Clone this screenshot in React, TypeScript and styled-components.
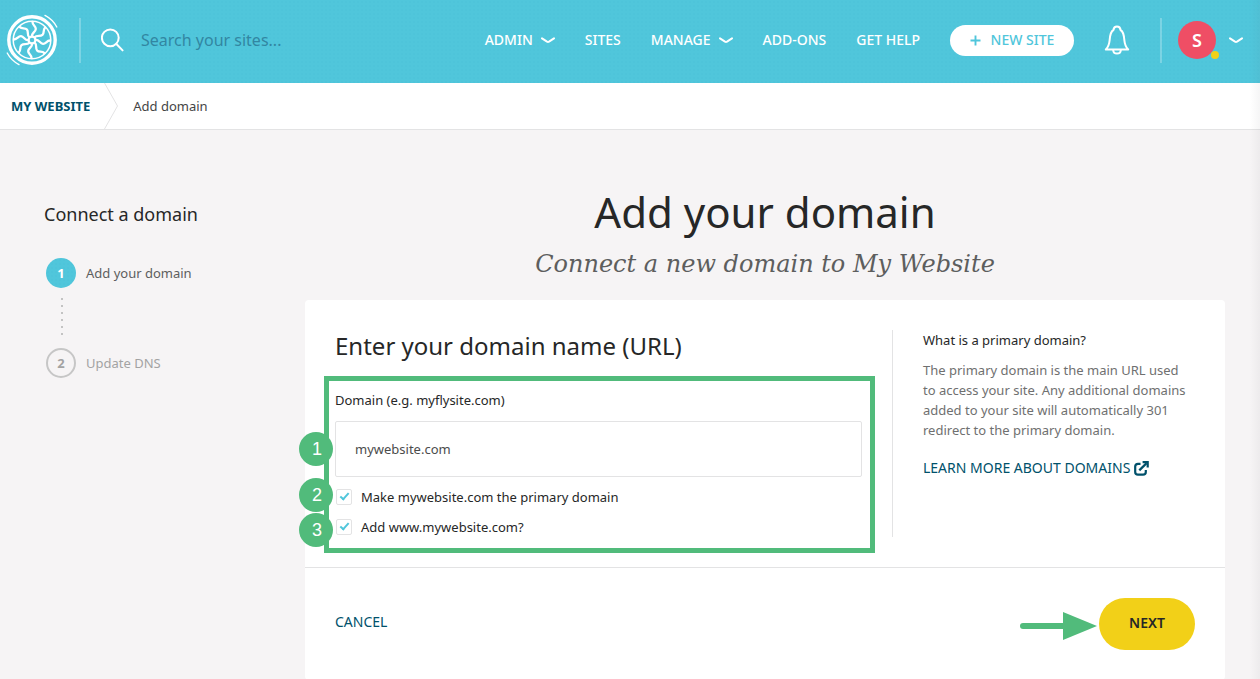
import React from "react";
import styled, { createGlobalStyle, css } from "styled-components";

const color = {
  teal: "#50c6db",
  navy: "#00516b",
  ink: "#262727",
  text: "#5d5e5e",
  muted: "#a3a3a3",
  line: "#e3e3e4",
  page: "#f6f4f5",
  green: "#51bb7b",
  yellow: "#f2d018",
  pink: "#ef4e65",
};

const dots = css`
  background-color: ${color.teal};
  background-image: radial-gradient(circle, rgba(0, 100, 140, 0.02) 1px, transparent 1px);
  background-size: 4px 4px;
`;

const GlobalStyle = createGlobalStyle`
  *, *::before, *::after { box-sizing: border-box; }
  body {
    margin: 0;
    background: ${color.page};
    color: ${color.ink};
    font-family: "Noto Sans", "Open Sans", sans-serif;
    font-size: 13px;
    line-height: 20px;
  }
  h1, h2, h3, p, ol { margin: 0; padding: 0; font-weight: 400; }
  button, input { font: inherit; color: inherit; }
  a { text-decoration: none; color: inherit; }
`;

const Page = styled.div`
  position: relative;
  min-height: 100vh;
  overflow-x: hidden;
`;

const EdgeShade = styled.div`
  position: absolute;
  inset: 0 0 0 auto;
  width: 10px;
  background: linear-gradient(to right, transparent, rgba(90, 90, 100, 0.06));
  pointer-events: none;
`;

const Header = styled.header`
  ${dots}
  display: flex;
  align-items: center;
  height: 83px;
  padding: 0 17px 3px 6px;
  color: #fff;
`;

const Rule = styled.span<{ $before: number; $after: number }>`
  width: 2px;
  height: 45px;
  margin: 0 ${(p) => p.$after}px 0 ${(p) => p.$before}px;
  background: rgba(255, 255, 255, 0.25);
`;

const HomeLink = styled.a`
  display: flex;
`;

const Search = styled.label`
  display: flex;
  flex: 1;
  align-items: center;
  gap: 16px;
  min-width: 0;
`;

const SearchInput = styled.input`
  flex: 1;
  min-width: 0;
  padding: 0;
  border: 0;
  outline: 0;
  background: transparent;
  font-size: 16px;
  line-height: 24px;
  &::placeholder {
    color: #3286a2;
    opacity: 1;
  }
`;

const Nav = styled.nav`
  display: flex;
  align-items: center;
  gap: 30px;
`;

const NavLink = styled.a`
  display: flex;
  align-items: center;
  gap: 8px;
  font-size: 14px;
  font-weight: 500;
  white-space: nowrap;
`;

const NewSite = styled.button`
  display: flex;
  align-items: center;
  justify-content: center;
  gap: 10px;
  width: 124px;
  height: 31px;
  padding: 0;
  border: 0;
  border-radius: 16px;
  background: #fff;
  color: ${color.teal};
  font-size: 14px;
  font-weight: 500;
  white-space: nowrap;
`;

const IconButton = styled.button`
  display: flex;
  align-items: center;
  padding: 0;
  border: 0;
  background: none;
`;

const Account = styled(IconButton)`
  gap: 13px;
`;

const Avatar = styled.span`
  position: relative;
  display: grid;
  place-items: center;
  width: 38px;
  height: 38px;
  border-radius: 50%;
  background: ${color.pink};
  color: #fff;
  font-size: 18px;
  font-weight: 600;
  &::after {
    content: "";
    position: absolute;
    right: -3px;
    bottom: 0;
    width: 8px;
    height: 8px;
    border-radius: 50%;
    background: ${color.yellow};
  }
`;

const Breadcrumb = styled.nav`
  display: flex;
  align-items: center;
  height: 47px;
  padding: 0 11px;
  border-bottom: 1px solid ${color.line};
  background: #fff;
  color: #444545;
`;

const CrumbLink = styled.a`
  color: ${color.navy};
  font-weight: 700;
`;

const CrumbArrow = styled.svg`
  margin: 0 15px 0 14px;
`;

const Main = styled.main`
  display: grid;
  grid-template-columns: 261px minmax(0, 1fr);
  padding: 58px 35px 0 44px;
`;

const Sidebar = styled.aside`
  padding-top: 14px;
`;

const SidebarTitle = styled.h2`
  font-size: 18px;
  line-height: 24px;
`;

const Steps = styled.ol`
  padding: 32px 0 0 2px;
  list-style: none;
`;

const Step = styled.li<{ $active?: boolean }>`
  position: relative;
  display: flex;
  align-items: center;
  gap: 10px;
  color: ${(p) => (p.$active ? color.text : color.muted)};
  &:not(:first-child) {
    margin-top: 60px;
  }
  &:not(:first-child)::before {
    content: "";
    position: absolute;
    left: 15px;
    top: -50px;
    width: 2px;
    height: 38px;
    background: repeating-linear-gradient(to bottom, #c3c3c3 0, #c3c3c3 2px, transparent 2px, transparent 7px);
  }
`;

const StepNumber = styled.span<{ $active?: boolean }>`
  display: grid;
  place-items: center;
  width: 30px;
  height: 30px;
  border-radius: 50%;
  font-weight: 700;
  ${(p) =>
    p.$active
      ? css`
          ${dots}
          color: #fff;
        `
      : css`
          border: 2px solid #c6c6c6;
        `}
`;

const Title = styled.h1`
  font-size: 42px;
  line-height: 48px;
  text-align: center;
`;

const Subtitle = styled.p`
  margin: 14px 0 22px;
  color: ${color.text};
  font-family: "DejaVu Serif", serif;
  font-size: 24px;
  font-style: italic;
  line-height: 28px;
  text-align: center;
`;

const Card = styled.form`
  border-radius: 4px;
  background: #fff;
`;

const CardBody = styled.div`
  display: grid;
  grid-template-columns: minmax(0, 1fr) 303px;
  padding: 30px;
`;

const FormColumn = styled.section`
  padding-right: 30px;
`;

const FormTitle = styled.h2`
  margin-bottom: 28px;
  font-size: 24px;
  line-height: 32px;
`;

const Fields = styled.div`
  position: relative;
`;

const FieldLabel = styled.label`
  display: block;
  margin-bottom: 11px;
`;

const TextInput = styled.input`
  display: block;
  width: 100%;
  height: 56px;
  padding: 0 19px;
  border: 1px solid ${color.line};
  border-radius: 2px;
  outline: 0;
  color: #4b4c4c;
`;

const CheckRow = styled.label`
  display: flex;
  align-items: center;
  gap: 9px;
  margin-top: 10px;
  padding-left: 1px;
`;

const Checkbox = styled.input`
  display: grid;
  place-items: center;
  width: 16px;
  height: 16px;
  margin: 0;
  appearance: none;
  border: 1px solid ${color.line};
  border-radius: 2px;
  background: #fff;
  &:checked::after {
    content: "";
    width: 5px;
    height: 9px;
    margin-bottom: 3px;
    border: solid ${color.teal};
    border-width: 0 2px 2px 0;
    transform: rotate(42deg);
  }
`;

const Highlight = styled.div`
  position: absolute;
  inset: -14px -13px -16px -11px;
  border: 5px solid ${color.green};
  pointer-events: none;
`;

const Marker = styled.span<{ $top: number }>`
  position: absolute;
  left: -36px;
  top: ${(p) => p.$top}px;
  display: grid;
  place-items: center;
  width: 34px;
  height: 34px;
  padding-left: 2px;
  border-radius: 50%;
  background: ${color.green};
  color: #fff;
  font-family: "Liberation Sans", sans-serif;
  font-size: 18px;
`;

const Help = styled.aside`
  padding-left: 30px;
  border-left: 1px solid ${color.line};
`;

const HelpTitle = styled.h3`
  margin-bottom: 10px;
  font-size: 13px;
`;

const HelpText = styled.p`
  margin-bottom: 18px;
  padding-right: 8px;
  color: #6f7070;
`;

const HelpLink = styled.a`
  display: flex;
  align-items: center;
  gap: 4px;
  color: ${color.navy};
  font-size: 14px;
  white-space: nowrap;
`;

const CardFooter = styled.footer`
  display: flex;
  align-items: center;
  padding: 30px;
  border-top: 1px solid ${color.line};
`;

const Cancel = styled.a`
  margin-right: auto;
  padding-bottom: 4px;
  color: ${color.navy};
  font-size: 14px;
`;

const Pointer = styled.svg`
  margin: 4px 2px 0 0;
`;

const Next = styled.button`
  width: 96px;
  height: 52px;
  padding: 0 0 2px;
  border: 0;
  border-radius: 26px;
  background: ${color.yellow};
  font-size: 14px;
  font-weight: 600;
`;

const Chevron = () => (
  <svg width="14" height="8" viewBox="0 0 14 8" fill="none" stroke="#fff" strokeWidth="2" strokeLinecap="round" aria-hidden="true">
    <path d="M1 2.4 L6 5.6 Q7 6.2 8 5.6 L13 2.4" />
  </svg>
);

const Logo = () => (
  <svg width="52" height="52" viewBox="-26 -26 52 52" fill="none" stroke="#fff" strokeLinecap="round" aria-hidden="true">
    <circle r="23.2" strokeWidth="3.4" />
    <circle r="18.8" strokeWidth="1.5" />
    <circle r="3.4" strokeWidth="2.2" />
    {[0, 45, 90, 135, 180, 225, 270, 315].map((angle) => (
      <path key={angle} transform={`rotate(${angle})`} strokeWidth="2.3" d="M0 -4 C-0.5 -7 3.6 -8 3.8 -11 C4 -14 0.5 -14.5 0.5 -18" />
    ))}
    <path strokeWidth="1.4" d="M13 -24.6 A28.2 28.2 0 0 1 24.8 -13 M-13 24.6 A28.2 28.2 0 0 1 -24.8 13" />
  </svg>
);

const SearchIcon = () => (
  <svg width="24" height="24" viewBox="0 0 24 24" fill="none" stroke="#fff" strokeWidth="2" strokeLinecap="round" aria-hidden="true">
    <circle cx="9.3" cy="9.8" r="8.4" />
    <path d="M15.4 16 L21.6 22.4" />
  </svg>
);

const Bell = () => (
  <svg width="26" height="30" viewBox="0 0 26 30" fill="none" stroke="#fff" strokeWidth="2" strokeLinecap="round" strokeLinejoin="round" aria-hidden="true">
    <path d="M1.8 24.5 H24.2 C21.6 22 20.8 19.5 20.4 15.5 C20 9.5 19.4 6.5 16.6 5 C16 0.4 10 0.4 9.4 5 C6.6 6.5 6 9.5 5.6 15.5 C5.2 19.5 4.4 22 1.8 24.5 Z" />
    <path d="M9.2 25 C9.4 29.8 16.6 29.8 16.8 25" />
  </svg>
);

const Plus = () => (
  <svg width="11" height="11" viewBox="0 0 11 11" stroke="currentColor" strokeWidth="1.9" aria-hidden="true">
    <path d="M5.5 0.5 V10.5 M0.5 5.5 H10.5" />
  </svg>
);

const External = () => (
  <svg width="15" height="15" viewBox="0 0 15 15" fill="none" stroke="currentColor" strokeWidth="2.2" aria-hidden="true">
    <path d="M6.5 2.8 H4 Q1.2 2.8 1.2 5.6 V11 Q1.2 13.7 4 13.7 H9 Q11.8 13.7 11.8 11 V9" />
    <path d="M5.3 9.4 L12.6 2.1" />
    <path d="M8.6 1.2 H13.7 V6.4" />
  </svg>
);

export default function App() {
  return (
    <Page>
      <GlobalStyle />
      <Header>
        <HomeLink href="#" aria-label="Home">
          <Logo />
        </HomeLink>
        <Rule $before={21} $after={20} />
        <Search>
          <SearchIcon />
          <SearchInput type="search" placeholder="Search your sites..." aria-label="Search your sites" />
        </Search>
        <Nav>
          <NavLink href="#">
            ADMIN <Chevron />
          </NavLink>
          <NavLink href="#">SITES</NavLink>
          <NavLink href="#">
            MANAGE <Chevron />
          </NavLink>
          <NavLink href="#">ADD-ONS</NavLink>
          <NavLink href="#">GET HELP</NavLink>
          <NewSite type="button">
            <Plus /> NEW SITE
          </NewSite>
          <IconButton type="button" aria-label="Notifications">
            <Bell />
          </IconButton>
        </Nav>
        <Rule $before={30} $after={16} />
        <Account type="button" aria-label="Account">
          <Avatar>S</Avatar>
          <Chevron />
        </Account>
      </Header>
      <Breadcrumb aria-label="Breadcrumb">
        <CrumbLink href="#">MY WEBSITE</CrumbLink>
        <CrumbArrow width="14" height="46" viewBox="0 0 14 46" fill="none" stroke={color.line} aria-hidden="true">
          <path d="M0.5 0 L13.5 23 L0.5 46" />
        </CrumbArrow>
        <span>Add domain</span>
      </Breadcrumb>
      <Main>
        <Sidebar>
          <SidebarTitle>Connect a domain</SidebarTitle>
          <Steps>
            <Step $active>
              <StepNumber $active>1</StepNumber>
              Add your domain
            </Step>
            <Step>
              <StepNumber>2</StepNumber>
              Update DNS
            </Step>
          </Steps>
        </Sidebar>
        <section>
          <Title>Add your domain</Title>
          <Subtitle>Connect a new domain to My Website</Subtitle>
          <Card onSubmit={(e) => e.preventDefault()}>
            <CardBody>
              <FormColumn>
                <FormTitle>Enter your domain name (URL)</FormTitle>
                <Fields>
                  <FieldLabel htmlFor="domain">Domain (e.g. myflysite.com)</FieldLabel>
                  <TextInput id="domain" type="text" defaultValue="mywebsite.com" />
                  <CheckRow>
                    <Checkbox type="checkbox" defaultChecked />
                    Make mywebsite.com the primary domain
                  </CheckRow>
                  <CheckRow>
                    <Checkbox type="checkbox" defaultChecked />
                    Add www.mywebsite.com?
                  </CheckRow>
                  <Highlight />
                  <Marker $top={42}>1</Marker>
                  <Marker $top={88}>2</Marker>
                  <Marker $top={123}>3</Marker>
                </Fields>
              </FormColumn>
              <Help>
                <HelpTitle>What is a primary domain?</HelpTitle>
                <HelpText>
                  The primary domain is the main URL used to access your site. Any additional domains added to your site
                  will automatically 301 redirect to the primary domain.
                </HelpText>
                <HelpLink href="#">
                  LEARN MORE ABOUT DOMAINS <External />
                </HelpLink>
              </Help>
            </CardBody>
            <CardFooter>
              <Cancel href="#">CANCEL</Cancel>
              <Pointer width="77" height="28" viewBox="0 0 77 28" fill={color.green} aria-hidden="true">
                <rect x="0" y="11" width="50" height="6" rx="3" />
                <path d="M43 0 L77 14 L43 28 Z" />
              </Pointer>
              <Next type="submit">NEXT</Next>
            </CardFooter>
          </Card>
        </section>
      </Main>
      <EdgeShade />
    </Page>
  );
}
